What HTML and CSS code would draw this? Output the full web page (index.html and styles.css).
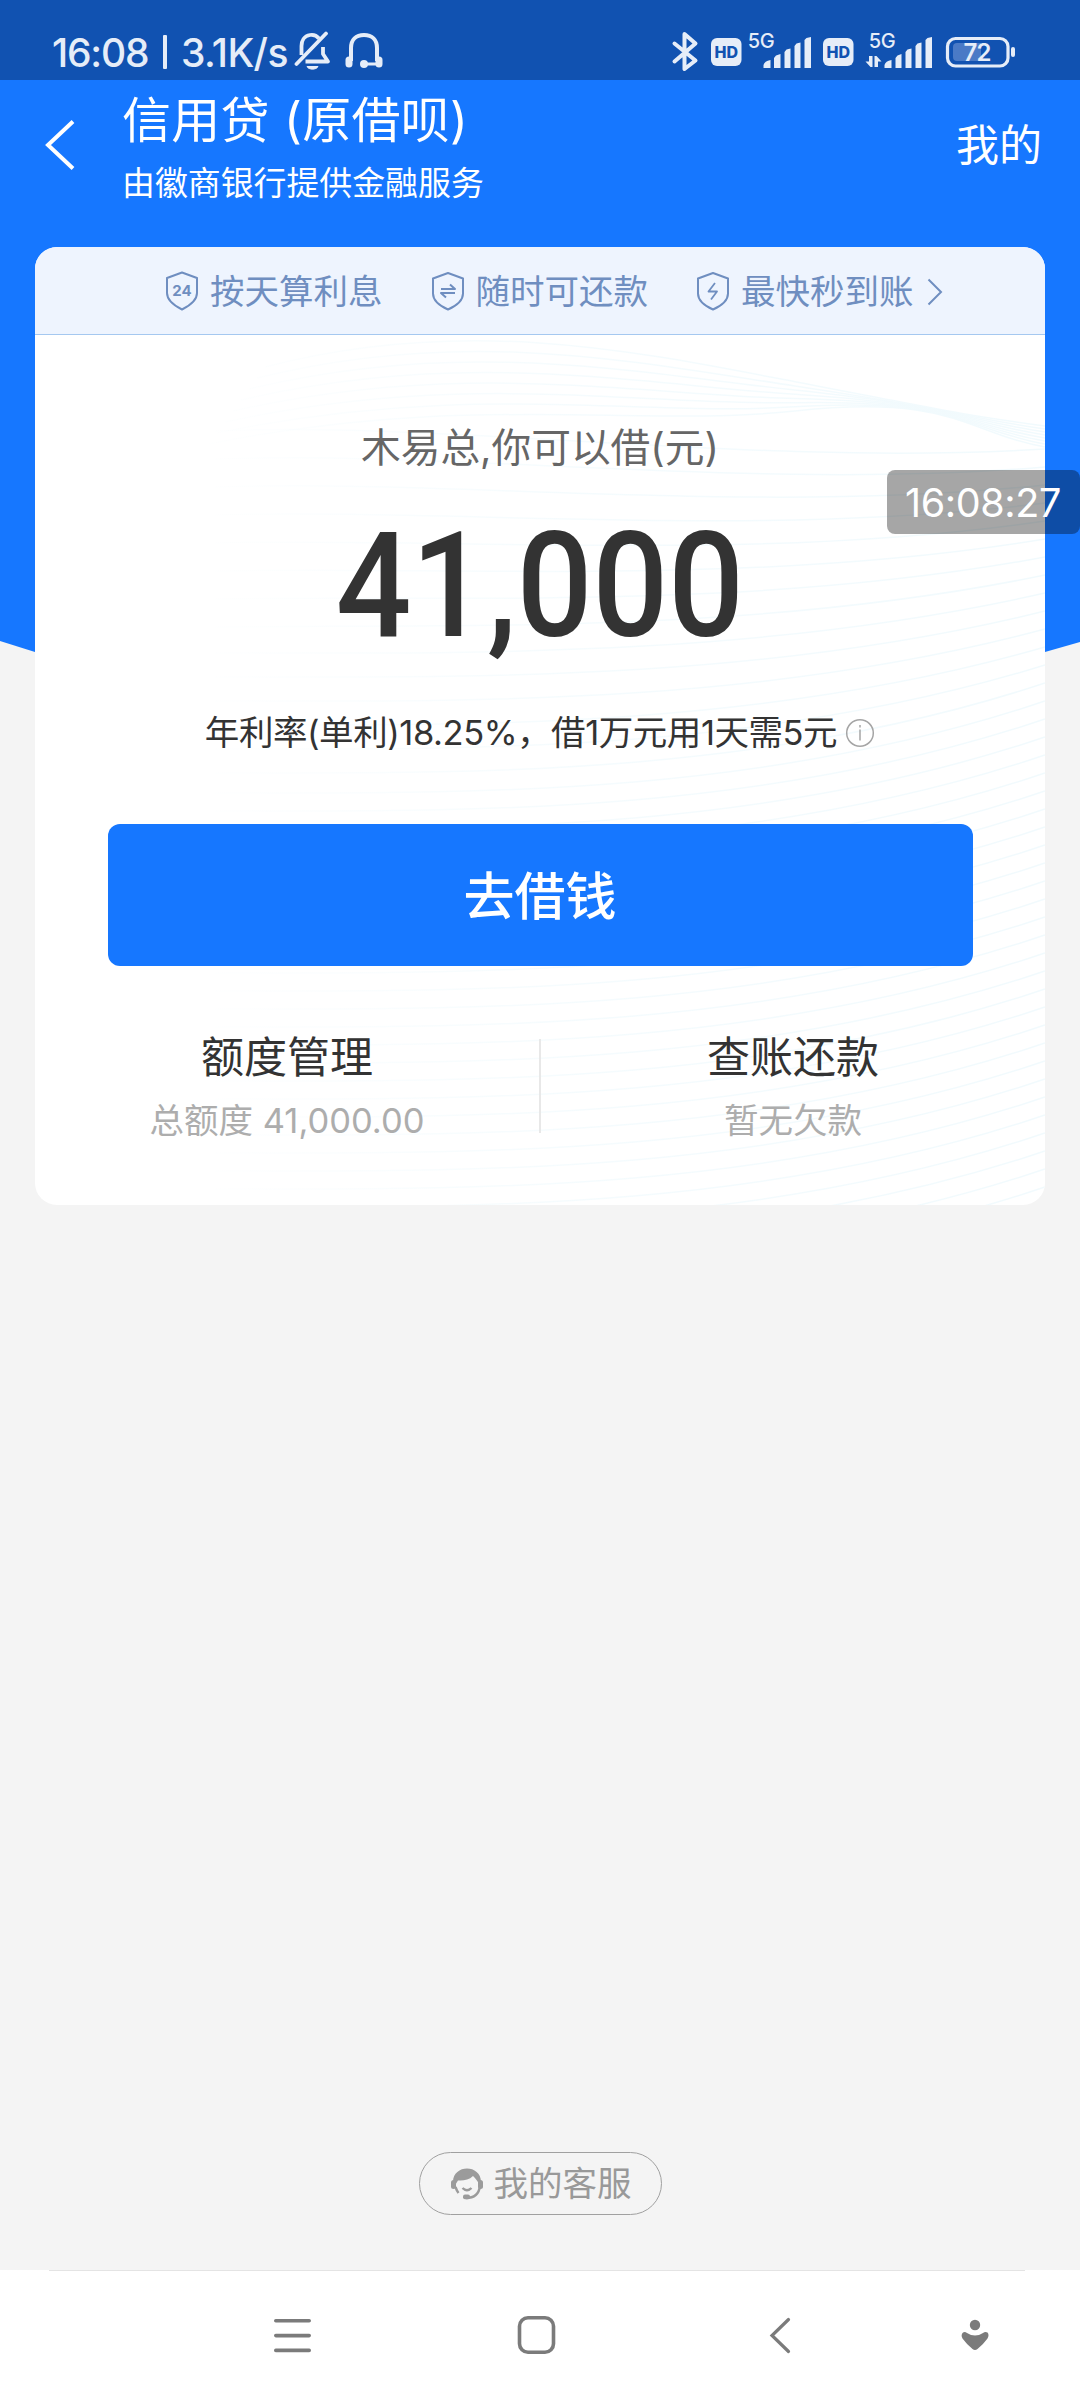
FILE: index.html
```html
<!DOCTYPE html>
<html lang="zh-CN">
<head>
<meta charset="utf-8">
<title>信用贷</title>
<link rel="stylesheet" href="styles.css">
</head>
<body>
<div class="screen">
  <div class="status">
    <div class="status-left">
      <span class="clock">16:08</span>
      <i class="bar"></i>
      <span class="speed">3.1K/s</span>
      <svg class="bell" width="38" height="42" viewBox="0 0 38 42" fill="none" stroke="#e6edf8" stroke-width="3.800" stroke-linejoin="round">
        <path d="M25 8.500C22.600 5.500 19 4.500 16 5C10 6 7.500 11 7.500 16V25"/>
        <path d="M29 17V24L34 31.500H11.500"/>
        <path d="M32 3.500L2.500 34" stroke-linecap="round"/>
        <path d="M13 36.500H24C22.500 40 14.500 40 13 36.500Z" fill="#e6edf8" stroke-width="1"/>
      </svg>
      <svg class="phones" width="38" height="40" viewBox="0 0 38 40" fill="none">
        <path d="M6 30V17C6 9 11 4 19 4S32 9 32 17V30" stroke="#e6edf8" stroke-width="4"/>
        <path d="M21 33H32" stroke="#e6edf8" stroke-width="3"/>
        <rect x="0.500" y="25.500" width="7" height="11" rx="3.500" fill="#e6edf8"/>
        <rect x="30.500" y="25.500" width="7" height="11" rx="3.500" fill="#e6edf8"/>
        <circle cx="19" cy="33" r="4" fill="#e6edf8"/>
      </svg>
    </div>
    <div class="status-right">
      <svg width="346" height="42" viewBox="670 30 346 42" fill="#e6edf8">
        <path d="M674.500 43.500L695.500 60.500L684.500 69V34L695.500 43.500L674.500 61.500" fill="none" stroke="#e6edf8" stroke-width="4" stroke-linejoin="round" stroke-linecap="round"/>
        <rect x="711" y="38" width="30.500" height="28" rx="6"/>
        <text class="t-hd" x="726.300" y="57.700">HD</text>
        <text class="t-5g" x="761" y="48">5G</text>
        <path d="M763.500 68V65Q764.500 61 770.500 60V68ZM774 68V58L776 55.500L780.500 54V68ZM784.500 68V52L786.500 49.500L790.500 48.500V68ZM794.500 68V46L796.500 43.500L800.500 42.500V68ZM804.500 68V40L806.500 38L811 37V68Z"/>
        <rect x="823" y="38" width="30.500" height="28" rx="6"/>
        <text class="t-hd" x="838.300" y="57.700">HD</text>
        <text class="t-5g" x="882" y="48">5G</text>
        <path d="M884.500 68V65Q885.500 61 891.500 60V68ZM895.500 68V58L897.500 55.500L901.500 54V68ZM905.500 68V52L907.500 49.500L911.500 48.500V68ZM915.500 68V46L917.500 43.500L921.500 42.500V68ZM925.500 68V40L927.500 38L932 37V68Z"/>
        <path d="M869 56H872.500V67H870.500L865.500 61.500H869ZM874.500 67V56H876.500L881.500 61.500H878V67Z"/>
        <rect x="947.500" y="38.500" width="60.500" height="27.500" rx="8" fill="none" stroke="#e6edf8" stroke-width="3.200"/>
        <path d="M957 43H981V61H957Q953 61 953 57V47Q953 43 957 43Z" fill="#4a7ac6"/>
        <text class="t-bat" x="977" y="61">72</text>
        <rect x="1011" y="47" width="4" height="10" rx="2"/>
      </svg>
    </div>
  </div>

  <div class="top">
    <header class="head">
      <svg class="back" width="32" height="52" viewBox="0 0 32 52" fill="none" stroke="#fff" stroke-width="4"><path d="M29 2.500L4 26L29 49.500"/></svg>
      <div class="titles">
        <h1>信用贷 (原借呗)</h1>
        <p>由徽商银行提供金融服务</p>
      </div>
      <a class="mine">我的</a>
    </header>

    <section class="card">
      <div class="features">
        <div class="feature">
          <svg width="34" height="40" viewBox="0 0 34 40" fill="none" stroke="#6f8ec0" stroke-width="2" stroke-linejoin="round"><path d="M17 1.500L32 7V22C32 29 26 34 17 38.500C8 34 2 29 2 22V7Z"/><text class="t-24" x="17" y="25">24</text></svg>
          <span>按天算利息</span>
        </div>
        <div class="feature">
          <svg width="34" height="40" viewBox="0 0 34 40" fill="none" stroke="#6f8ec0" stroke-width="2" stroke-linejoin="round"><path d="M17 2L32 7.500V22.500C32 29.500 26 34.500 17 38.500C8 34.500 2 29.500 2 22.500V7.500Z"/><path d="M10 18H24L19 13.500M24 22H10L15 26.500"/></svg>
          <span>随时可还款</span>
        </div>
        <div class="feature">
          <svg width="34" height="40" viewBox="0 0 34 40" fill="none" stroke="#6f8ec0" stroke-width="2" stroke-linejoin="round"><path d="M17 2L32 7.500V22.500C32 29.500 26 34.500 17 38.500C8 34.500 2 29.500 2 22.500V7.500Z"/><path d="M19 12L12.500 20.500H21L15 28.500" stroke-width="1.800"/></svg>
          <span>最快秒到账</span>
          <svg class="more" width="16" height="28" viewBox="0 0 16 28" fill="none" stroke="#6f8ec0" stroke-width="2"><path d="M1.500 1.500L14 14L1.500 26.500"/></svg>
        </div>
      </div>
      <div class="body">
        <svg class="waves" width="1010" height="870" viewBox="0 0 1010 870" fill="none" stroke="url(#fade)" stroke-width="1.500">
          <defs>
            <linearGradient id="fade" gradientUnits="userSpaceOnUse" x1="150" y1="0" x2="1010" y2="0">
              <stop offset="0" stop-color="#f1fafd" stop-opacity="0"/>
              <stop offset="0.450" stop-color="#f1fafd" stop-opacity="0.700"/>
              <stop offset="1" stop-color="#f1fafd"/>
            </linearGradient>
          </defs>
          <g id="waves"></g>
        </svg>
        <div class="hint">木易总,你可以借(元)</div>
        <div class="amount"><span>41,000</span></div>
        <div class="rate">
          <span>年利率(单利)18.25%，借1万元用1天需5元</span>
          <svg width="30" height="30" viewBox="0 0 30 30" fill="none" stroke="#a5a5a5" stroke-width="1.500"><circle cx="15" cy="15" r="13.300"/><path d="M15 11.500V22.500M15 7V9.500"/></svg>
        </div>
        <button class="borrow">去借钱</button>
        <div class="links">
          <div class="link"><b>额度管理</b><span>总额度 41,000.00</span></div>
          <div class="link"><b>查账还款</b><span>暂无欠款</span></div>
        </div>
      </div>
    </section>
    <div class="stamp">16:08:27</div>
  </div>

  <div class="service">
    <svg width="34" height="34" viewBox="0 0 34 34">
      <path d="M3 15C3 6 10 1.500 17 1.500S31 6 31 15L28.500 16C27 13 25 11 23 9C19 13 13 14 8 13.500L5.500 17.500Z" fill="#9b9b9b"/>
      <rect x="1" y="13" width="5" height="9" rx="2.500" fill="#9b9b9b"/>
      <rect x="28" y="13" width="5" height="9" rx="2.500" fill="#9b9b9b"/>
      <path d="M5.500 20C6.500 23 7 24 8.500 26M30 19C29 27 24 31 16 31M12.500 21Q17 25.500 21.500 21" fill="none" stroke="#9b9b9b" stroke-width="2.400"/>
      <rect x="13" y="27.500" width="7" height="4.700" rx="2" fill="#9b9b9b"/>
    </svg>
    <span>我的客服</span>
  </div>

  <nav class="nav">
    <svg width="40" height="40" viewBox="0 0 40 40" stroke="#7b7b7b" stroke-width="3.600" stroke-linecap="round"><path d="M3.800 4.800H37.200M3.800 19.600H37.200M3.800 34.400H37.200"/></svg>
    <svg width="40" height="40" viewBox="0 0 40 40" fill="none" stroke="#7b7b7b" stroke-width="3.600"><rect x="3.500" y="1.800" width="34" height="34.500" rx="8.500"/></svg>
    <svg width="24" height="40" viewBox="0 0 24 40" fill="none" stroke="#7b7b7b" stroke-width="3.200" stroke-linecap="round"><path d="M20.500 3.500L4 19.500L20.500 35.500"/></svg>
    <svg width="30" height="34" viewBox="0 0 30 34" fill="#7b7b7b"><circle cx="15" cy="7" r="5.200"/><path d="M3 14.500Q5 13.500 7 15Q15 20 23 15Q25 13.500 27.500 14.500Q29.500 17 27.500 20.500Q24 25.500 17.500 31Q15 33 12.500 31Q6 25.500 2.500 20.500Q.500 17 3 14.500Z"/></svg>
  </nav>
</div>
<script src="waves.js"></script>
</body>
</html>
```
FILE: waves.js
```js
// Fan of faint contour lines behind the card content.
var out = '';
var i, y;
// Upper bundle: spread on the left, converging at the right edge.
for (i = 0; i < 8; i++) {
  y = 2 + i * 11;
  out += '<path d="M' + (230 - i * 8) + ' ' + (y + 30) + 'C430 ' + (y - 22) + ' 600 ' + (y + 14) + ' 760 ' + (y * 0.38 + 46) + 'S930 ' + (80 + i * 2.5) + ' 1010 ' + (91 + i * 3) + '"/>';
}
// Lower lines: flat on the left, rising towards the right edge.
for (i = 0; i < 46; i++) {
  var end = 114 + i * 18;
  var low = end + 12 + Math.min(i * 6, 80);
  out += '<path d="M180 ' + (low - Math.max(0, 30 - i * 4)) + 'C420 ' + (low - Math.max(0, 40 - i * 5)) + ' 720 ' + (low + 6) + ' 1010 ' + end + '"/>';
}
document.getElementById('waves').innerHTML = out;
```
FILE: styles.css
```css
* { box-sizing: border-box; }
body {
  margin: 0;
  background: #f4f4f4;
  font-family: Inter, "Noto Sans CJK SC", sans-serif;
  color: #333;
}
h1, p { margin: 0; font-weight: 400; }
svg { display: block; flex: none; }
.screen { width: 1080px; height: 2400px; display: flex; flex-direction: column; background: #f4f4f4; overflow: hidden; }

.status {
  height: 80px; flex: none; background: #1152b1; color: #e6edf8;
  display: flex; justify-content: space-between; padding: 30px 64px 0 52px;
}
.status-left { display: flex; height: 42px; font-size: 39px; line-height: 45px; font-weight: 500; white-space: nowrap; }
.clock { width: 111px; letter-spacing: -1.2px; }
.bar { width: 4px; height: 34px; margin: 5px 14px 0 0; background: #e6edf8; border-radius: 1px; }
.speed { width: 113px; letter-spacing: -.6px; }
.phones { margin: 1px 0 0 13px; }
.t-hd { font: 800 16px Inter, sans-serif; fill: #1152b1; text-anchor: middle; }
.t-5g { font: 500 20px Inter, sans-serif; text-anchor: middle; letter-spacing: -.5px; }
.t-bat { font: 600 24px Inter, sans-serif; text-anchor: middle; letter-spacing: -1px; }
.t-24 { font: 700 15px Inter, sans-serif; text-anchor: middle; fill: #6f8ec0; stroke: none; }

.top { position: relative; flex: none; height: 1125px; }
.top::before {
  content: ""; position: absolute; inset: 0; background: #1677ff;
  clip-path: polygon(0 0, 1080px 0, 1080px 562px, 1045px 572px, 540px 640px, 35px 572px, 0 561px);
}
.head { position: relative; height: 167px; display: flex; padding: 0 38px 0 44px; color: #fff; }
.back { margin-top: 39px; }
.titles { flex: 1; padding: 11px 0 0 46px; }
h1 { font-size: 49px; line-height: 60px; height: 60px; letter-spacing: .3px; }
.titles p { font-size: 32.900px; line-height: 44px; margin-top: 10px; }
.mine { font-size: 43px; line-height: 60px; margin-top: 35px; }

.card { position: relative; width: 1010px; height: 958px; margin: 0 auto; border-radius: 22px; background: #fff; overflow: hidden; }
.features {
  height: 88px; background: #eef4fe; border-bottom: 1px solid #a5c8f0; color: #6f8ec0;
  display: flex; gap: 48px; padding: 24px 0 0 130px; font-size: 34.500px; line-height: 42px; white-space: nowrap;
}
.feature { display: flex; gap: 11px; }
.feature span { width: 172.500px; }
.more { margin: 7px 0 0 2px; }
.body { position: relative; height: 870px; display: flex; flex-direction: column; align-items: center; }
.waves { position: absolute; left: 0; top: 0; }
.body > div, .borrow { position: relative; }
.hint { margin-top: 85px; font-size: 39.700px; line-height: 56px; color: #666; }
.amount { height: 146px; margin-top: 38px; font: 500 146px/146px Roboto, sans-serif; }
.amount span { display: block; transform: scaleX(.912); }
.rate { display: flex; gap: 8px; height: 50px; margin-top: 47px; font-size: 34.500px; line-height: 51px; letter-spacing: -.45px; white-space: nowrap; }
.rate svg { margin-top: 11px; }
.borrow {
  width: 865px; height: 142px; margin-top: 67px; border: 0; border-radius: 12px; padding: 0 0 4px;
  background: #1677ff; color: #fff; font: 500 51px/134px "Noto Sans CJK SC", sans-serif;
}
.links { display: flex; width: 1010px; height: 94px; margin-top: 73px; }
.link { flex: 1; display: flex; flex-direction: column; align-items: center; }
.link + .link { border-left: 2px solid #e8e8e8; }
.link b { font-weight: 400; font-size: 43px; line-height: 60px; height: 60px; margin-top: -12px; }
.link span { font-size: 34.500px; line-height: 50px; margin-top: 9px; color: #adadad; white-space: nowrap; }
.stamp {
  position: absolute; right: 0; top: 390px; width: 193px; height: 64px; border-radius: 8px;
  background: rgba(0,0,0,.35); color: #fff; font-size: 39.500px; line-height: 66px; padding-left: 18px; letter-spacing: -.4px;
}

.service {
  display: flex; align-items: center; gap: 10px; width: 243px; height: 63px; flex: none;
  margin: 947px auto 0; padding-left: 30px; border: 1px solid #a0a0a0; border-radius: 32px;
  font-size: 34.500px; line-height: 50px; color: #999;
}
.nav {
  height: 130px; flex: none; margin-top: auto; background: linear-gradient(#e4e4e4, #e4e4e4) 49px 0 / 976px 1px no-repeat #fff;
  display: flex; padding-top: 46px; padding-left: 272px;
}
.nav svg:nth-child(2) { margin-left: 204px; }
.nav svg:nth-child(3) { margin-left: 212px; }
.nav svg:nth-child(4) { margin: 2px 0 0 168px; }
```
